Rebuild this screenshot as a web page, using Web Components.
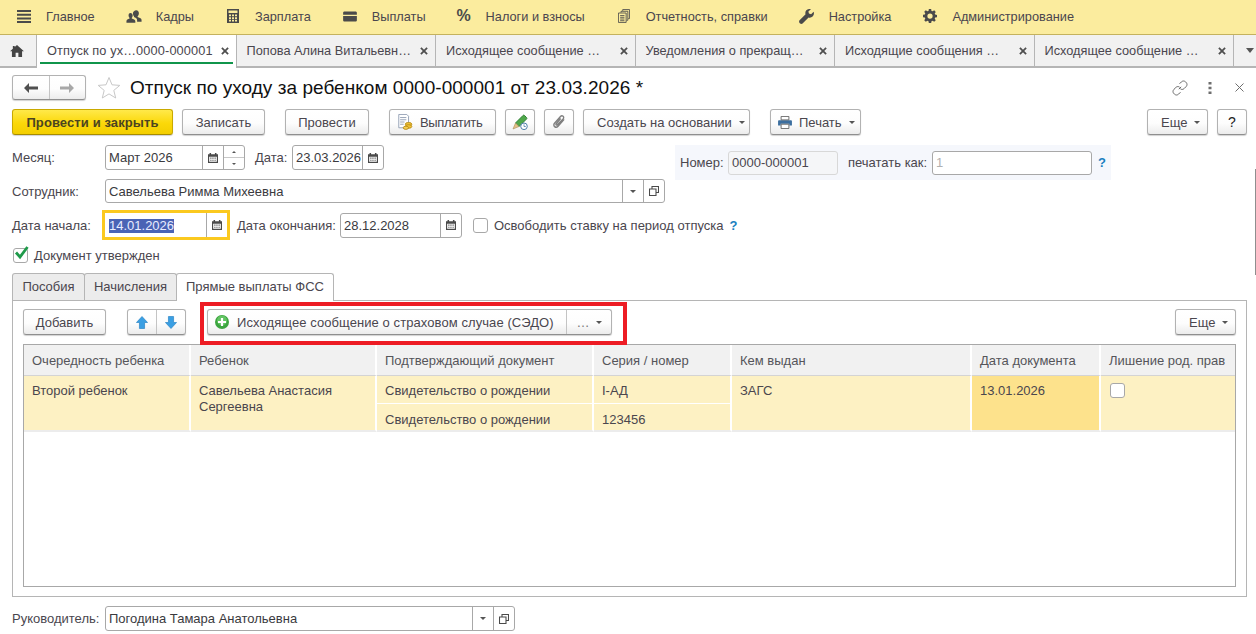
<!DOCTYPE html>
<html lang="ru">
<head>
<meta charset="utf-8">
<title>Отпуск по уходу за ребенком</title>
<style>
  html, body { margin: 0; height: 100%; overflow: hidden; background: #fff; }
  body { position: relative; font: 13px "Liberation Sans", Arial, sans-serif; color: #4b4b4b; }
</style>
</head>
<body>
<app-sections>
  <section-item icon="menu" gap="15" style="margin-left:17px">Главное</section-item>
  <section-item icon="people" gap="14" style="margin-left:31px">Кадры</section-item>
  <section-item icon="calc" gap="16" style="margin-left:33px">Зарплата</section-item>
  <section-item icon="wallet" gap="15" style="margin-left:32px">Выплаты</section-item>
  <section-item icon="percent" gap="15" style="margin-left:31px">Налоги и взносы</section-item>
  <section-item icon="docs" gap="16" style="margin-left:33px">Отчетность, справки</section-item>
  <section-item icon="wrench" gap="15" style="margin-left:31px">Настройка</section-item>
  <section-item icon="gear" gap="15" style="margin-left:32px">Администрирование</section-item>
</app-sections>

<open-tabs>
  <open-tab active style="letter-spacing:.13px">Отпуск по ух…0000-000001</open-tab>
  <open-tab>Попова Алина Витальевн…</open-tab>
  <open-tab>Исходящее сообщение …</open-tab>
  <open-tab>Уведомления о прекращ…</open-tab>
  <open-tab>Исходящие сообщения …</open-tab>
  <open-tab>Исходящее сообщение …</open-tab>
</open-tabs>

<doc-form></doc-form>

<template id="icons">
  <svg data-name="menu" width="14" height="13" viewBox="0 0 14 13"><path fill="#4a4a4a" d="M0 0h14v2H0zM0 3.700h14v2H0zM0 7.400h14v2H0zM0 11h14v2H0z"/></svg>
  <svg data-name="people" width="16" height="15" viewBox="0 0 18 16"><path fill="#4a4a4a" d="M11.500 1c1.900 0 3 1.500 3 3.400 0 1.400-.6 2.600-1.400 3.300v1l3.200 1.400c.8.400 1.200 1 1.200 1.900v2h-5v-1.700c0-1.300-.6-2.200-1.800-2.800l-1.700-.8V7.700c-.8-.7-1.200-2-1.200-3.300C8 2.500 9.600 1 11.500 1zM5 4c1.500 0 2.500 1.200 2.500 2.800 0 1.100-.5 2.100-1 2.700v.8l2.700 1.200c.8.400 1.300 1 1.300 1.800V15H.5v-1.700c0-.8.3-1.400 1-1.800l2.500-1.200v-.8c-.6-.6-1.100-1.600-1.100-2.700C2.900 5.200 3.500 4 5 4z"/></svg>
  <svg data-name="calc" width="12" height="14" viewBox="0 0 12 14"><path fill="#4a4a4a" fill-rule="evenodd" d="M0 0h12v14H0zM1.500 1.500v2.500h9V1.500zM2 5.500v1.700h2V5.500zM5 5.500v1.700h2V5.500zM8 5.500v1.700h2V5.500zM2 8.200v1.700h2V8.200zM5 8.200v1.700h2V8.200zM8 8.200v1.700h2V8.200zM2 10.800v1.700h2v-1.700zM5 10.800v1.700h2v-1.700zM8 10.800v1.700h2v-1.700z"/></svg>
  <svg data-name="wallet" width="14" height="11" viewBox="0 0 15 12"><path fill="#4a4a4a" d="M0 2c0-.8.6-1.500 1.500-1.500h12c.8 0 1.500.7 1.500 1.500v2H0zM0 5.500h15V10c0 .8-.7 1.500-1.500 1.500h-12C.7 11.500 0 10.800 0 10z"/></svg>
  <svg data-name="docs" width="12" height="14" viewBox="0 0 14 16"><path fill="none" stroke="#4a4a4a" d="M.5 4.500h9v11h-9zM2.500 7.500h5M2.500 9.500h5M2.500 11.500h5M2.500 13.500h5M3.500 4V2.500h8V13H10M5.500 2V.5h8V11H12"/></svg>
  <svg data-name="wrench" width="15" height="15" viewBox="0 0 16 16"><path fill="#4a4a4a" d="M15.600 2.900 12.900 5.500l-2.300-.6-.6-2.300L12.700.3C10.900-.4 8.900.1 7.800 1.400 6.700 2.600 6.500 4.300 7 5.700L.6 12.100c-.7.700-.7 1.900 0 2.700l.6.600c.7.700 1.900.7 2.600 0l6.400-6.400c1.400.5 3.100.2 4.300-.9 1.300-1.300 1.800-3.300 1.100-5.200z"/></svg>
  <svg data-name="gear" width="14" height="14" viewBox="0 0 16 16"><path fill="#4a4a4a" fill-rule="evenodd" d="M6.700 0h2.600l.4 2.200 1.300.5L12.800 1.500l1.800 1.800-1.200 1.800.5 1.300 2.100.4v2.600l-2.100.4-.5 1.300 1.200 1.800-1.800 1.800-1.800-1.200-1.300.5-.4 2.200H6.700l-.4-2.200-1.300-.5-1.800 1.200-1.800-1.800 1.200-1.800-.5-1.300L0 9.300V6.700l2.100-.4.5-1.300-1.200-1.800 1.800-1.800L5 2.700l1.300-.5zM8 5a3 3 0 1 0 0 6 3 3 0 0 0 0-6z"/></svg>
  <svg data-name="home" width="14" height="12" viewBox="0 0 15 13"><path fill="#444" d="M7.500 0 15 6.700h-2V13H9V8.500H6V13H2V6.700H0L3 4V1h2v1.300z"/></svg>
  <svg data-name="close" width="8" height="8" viewBox="0 0 9 9"><path stroke="#4f4f4f" stroke-width="2" d="M1 1l7 7M8 1 1 8"/></svg>
  <svg data-name="back" width="14" height="10" viewBox="0 0 14 10"><path fill="#4f4f4f" d="M5 0v3.500h9v3H5V10L0 5z"/></svg>
  <svg data-name="forward" width="14" height="10" viewBox="0 0 14 10"><path fill="#a8a8a8" d="M9 0v3.500H0v3h9V10l5-5z"/></svg>
  <svg data-name="star" width="24" height="23" viewBox="0 0 24 23"><path fill="#fff" stroke="#c8c8c8" d="M12 1.500l3 7.300 7.800.6-6 5 1.900 7.600L12 17.900 5.300 22l1.900-7.600-6-5 7.800-.6z"/></svg>
  <svg data-name="link" width="16" height="16" viewBox="0 0 16 16"><path fill="none" stroke="#6a6a6a" d="M6.800 9.200 9.200 6.800M7.500 3.800l1.900-1.900c1.200-1.200 3-1.200 4.200 0l.5.500c1.200 1.200 1.200 3 0 4.200l-1.900 1.900c-1.200 1.200-2.800 1.200-3.800.3M8.500 12.200l-1.900 1.900c-1.200 1.200-3 1.200-4.200 0l-.5-.5c-1.200-1.200-1.200-3 0-4.200l1.900-1.900c1.200-1.200 2.800-1.200 3.800-.3"/></svg>
  <svg data-name="dots" width="4" height="12" viewBox="0 0 4 12"><path fill="#6e6e6e" d="M.5 0h3v2.500h-3zM.5 4.700h3v2.500h-3zM.5 9.400h3v2.500h-3z"/></svg>
  <svg data-name="thin-close" width="9" height="9" viewBox="0 0 9 9"><path stroke="#6e6e6e" d="M.5.500l8 8M8.500.500l-8 8"/></svg>
  <svg data-name="pay" width="16" height="16" viewBox="0 0 17 18"><path fill="#fff" stroke="#8d9bb0" d="M1.500.5h9l2 2v13h-11z"/><path stroke="#8d9bb0" d="M3 4h7M3 6.500h7M3 9h5M3 11.500h4"/><ellipse cx="12.500" cy="11.500" rx="3.700" ry="2" fill="#f1c232" stroke="#b78b18"/><ellipse cx="12.500" cy="14" rx="3.700" ry="2" fill="#f1c232" stroke="#b78b18"/><ellipse cx="9.500" cy="15.500" rx="3" ry="1.800" fill="#f5cf52" stroke="#b78b18"/></svg>
  <svg data-name="pencil" width="16" height="16" viewBox="0 0 16 16"><path fill="#4fa84a" stroke="#2d7f33" d="M3.500 9 11 1.500c.5-.5 1-.5 1.500 0l2 2c.5.500.5 1 0 1.500L7 12.500z"/><path fill="#e3c187" stroke="#a98b58" stroke-width=".6" d="M3.500 9 7 12.500 1 15z"/><circle cx="12" cy="12.300" r="3.300" fill="#fff" stroke="#4d7fa8"/><path fill="none" stroke="#4d7fa8" stroke-width=".8" d="M12 10.300v2.200h1.800"/></svg>
  <svg data-name="clip" width="14" height="16" viewBox="0 0 15 17"><path fill="none" stroke="#808080" stroke-width="1.500" d="M13 5.500 6.500 13c-1 1.200-2.600 1.400-3.700.5-1.100-.9-1.100-2.500-.1-3.700l6.400-7.200c.8-.9 2-.9 2.800-.2.800.7.800 1.900 0 2.800L5.800 11.400c-.4.500-1 .5-1.300.2-.4-.3-.3-.9 0-1.300l4.800-5.500"/></svg>
  <svg data-name="print" width="14" height="13" viewBox="0 0 16 15"><path fill="#3d6f9f" d="M1 5h14c.6 0 1 .4 1 1v5h-3V9H3v2H0V6c0-.6.400-1 1-1z"/><path fill="#fff" stroke="#5a5a5a" d="M3.500.5h9v4h-9zM3.500 9.500h9v5h-9z"/></svg>
  <svg data-name="calendar" width="10" height="10" viewBox="0 0 13 13"><path fill="#4a4a4a" fill-rule="evenodd" d="M2 0h2v1.500h5V0h2v1.500h2V13H0V1.500h2zM1.500 5v6.500h10V5zM3 6h1.500v1.500H3zM5.700 6h1.500v1.500H5.700zM8.500 6H10v1.500H8.500zM3 8.700h1.500v1.500H3zM5.700 8.700h1.500v1.500H5.700zM8.500 8.700H10v1.500H8.500z"/></svg>
  <svg data-name="open" width="10" height="10" viewBox="0 0 12 12"><path fill="none" stroke="#4a4a4a" stroke-width="1.300" d="M3.600 3.600V.6h7.800v7.200H8.400M.6 3.600h7.800v7.800H.6z"/></svg>
  <svg data-name="up" width="12" height="13" viewBox="0 0 14 15"><path fill="#3a9fe3" stroke="#2a84c4" stroke-width=".8" d="M7 .5l6.500 7H10V14.500H4V7.500H.5z"/></svg>
  <svg data-name="down" width="12" height="13" viewBox="0 0 14 15"><path fill="#3a9fe3" stroke="#2a84c4" stroke-width=".8" d="M4 .5h6v7h3.500L7 14.500.5 7.500H4z"/></svg>
  <svg data-name="add" width="14" height="14" viewBox="0 0 14 14"><circle cx="7" cy="7" r="7" fill="#3ca53f"/><circle cx="7" cy="5.500" r="5" fill="#63c463"/><path stroke="#fff" stroke-width="2.200" d="M7 3v8M3 7h8"/></svg>
  <svg data-name="check" width="15" height="14" viewBox="0 0 15 14"><path fill="none" stroke="#1f9a4a" stroke-width="2.800" d="M2 6.500l4 4.500L13.500 1"/></svg>
</template>

<script>
  // общий набор иконок лежит в одном template, чтобы не дублировать разметку в shadow root
  function icon(name) {
    const src = document.getElementById('icons').content.querySelector(`[data-name="${name}"]`);
    return src ? src.outerHTML : '';
  }

  function glyphPercent() {
    return '<span style="font:bold 16px \'Liberation Sans\',sans-serif;color:#4a4a4a;width:14px;display:block;line-height:16px">%</span>';
  }

  class AppSections extends HTMLElement {
    constructor() {
      super();
      this.attachShadow({ mode: 'open' });
      this.shadowRoot.innerHTML = `
        <style>
          :host { display: flex; align-items: center; height: 32px; padding-bottom: 2px; background: #fbec9e; border-bottom: 1px solid #c4b25e; }
        </style>
        <slot></slot>`;
    }
  }

  class SectionItem extends HTMLElement {
    constructor() {
      super();
      this.attachShadow({ mode: 'open' });
    }
    connectedCallback() {
      const name = this.getAttribute('icon');
      const gap = this.getAttribute('gap') || 15;
      this.shadowRoot.innerHTML = `
        <style>
          :host { display: inline-flex; align-items: center; color: #4a464e; font-size: 12.750px; }
          i { display: flex; align-items: center; margin-right: ${gap}px; }
        </style>
        <i>${name == 'percent' ? glyphPercent() : icon(name)}</i><slot></slot>`;
    }
  }

  class OpenTabs extends HTMLElement {
    constructor() {
      super();
      this.attachShadow({ mode: 'open' });
      this.shadowRoot.innerHTML = `
        <style>
          :host { display: flex; height: 31px; background: #f1f1f1; border-bottom: 2px solid #b5b5b5; }
          .home { width: 37px; flex: none; display: flex; align-items: center; justify-content: center; border-right: 1px solid #b5b5b5; padding-right: 2px; box-sizing: border-box; }
          .more { flex: 1; display: flex; align-items: center; justify-content: flex-end; padding-right: 2px; }
          .more b { border: 4px solid transparent; border-top: 5px solid #555; border-bottom: 0; }
        </style>
        <div class="home">${icon('home')}</div>
        <slot></slot>
        <div class="more"><b></b></div>`;
    }
  }

  class OpenTab extends HTMLElement {
    constructor() {
      super();
      this.attachShadow({ mode: 'open' });
      this.shadowRoot.innerHTML = `
        <style>
          :host { position: relative; display: flex; flex: none; align-items: center; justify-content: space-between; box-sizing: border-box; width: 199.500px; padding: 0 7px 0 10px; height: 31px; border-right: 1px solid #b5b5b5; font-size: 12.750px; color: #4a464e; white-space: nowrap; }
          :host([active]) { background: #fff; height: 33px; margin-bottom: -2px; padding-bottom: 2px; }
          :host([active])::after { content: ""; position: absolute; left: 3px; right: 3px; bottom: 4px; height: 2px; background: #10954b; }
          i { display: flex; }
        </style>
        <span><slot></slot></span><i>${icon('close')}</i>`;
    }
  }

  class ToolBtn extends HTMLElement {
    constructor() {
      super();
      this.attachShadow({ mode: 'open' });
    }
    connectedCallback() {
      const menu = this.hasAttribute('menu') ? '<b class="arrow"></b>' : '';
      const name = this.getAttribute('icon');
      this.shadowRoot.innerHTML = `
        <style>
          :host { display: inline-flex; align-items: center; justify-content: center; box-sizing: border-box; height: 26px; padding: 0 10px; flex: none; white-space: nowrap; color: #4a464e; border: 1px solid #b2b2b2; border-bottom-color: #8f8f8f; border-radius: 3px; background: linear-gradient(#fff, #fdfdfd 55%, #ececec); box-shadow: 0 1px 1px rgba(0,0,0,.18); }
          :host([menu]), :host([icon]) { justify-content: flex-start; }
          :host([primary]) { background: linear-gradient(#ffe94a, #fbd809 55%, #f3ce00); border-color: #c9a900; border-bottom-color: #a78c00; font-weight: bold; color: #4b4420; letter-spacing: .1px; }
          i { display: flex; }
          i.text { margin-right: 7px; }
          .arrow { border: 3px solid transparent; border-top: 3px solid #555; border-bottom: 0; margin-left: 7px; }
        </style>
        ${name ? `<i class="${this.textContent.trim() ? 'text' : ''}">${icon(name)}</i>` : ''}<slot></slot>${menu}`;
    }
  }

  class SplitNav extends HTMLElement {
    constructor() {
      super();
      this.attachShadow({ mode: 'open' });
    }
    connectedCallback() {
      const items = this.getAttribute('icons').split(' ');
      const w = this.getAttribute('item-width') || 37;
      this.shadowRoot.innerHTML = `
        <style>
          :host { display: inline-flex; box-sizing: border-box; height: ${this.getAttribute('h') || 26}px; flex: none; border: 1px solid #b2b2b2; border-bottom-color: #8f8f8f; border-radius: 3px; background: linear-gradient(#fff, #fdfdfd 55%, #ececec); box-shadow: 0 1px 1px rgba(0,0,0,.18); }
          span { display: flex; align-items: center; justify-content: center; width: ${w}px; }
          span + span { border-left: 1px solid #c4c4c4; }
        </style>
        ${items.map(n => `<span>${icon(n)}</span>`).join('')}`;
    }
  }

  class InputField extends HTMLElement {
    constructor() {
      super();
      this.attachShadow({ mode: 'open' });
    }
    connectedCallback() {
      const buttons = (this.getAttribute('buttons') || '').split(' ').filter(Boolean);
      const parts = buttons.map(b => {
        if (b == 'drop') return '<span class="btn"><b class="arrow"></b></span>';
        if (b == 'spin') return '<span class="btn spin"><em><b class="up"></b></em><em><b class="arrow"></b></em></span>';
        return `<span class="btn">${icon(b)}</span>`;
      }).join('');
      this.shadowRoot.innerHTML = `
        <style>
          :host { display: inline-flex; box-sizing: border-box; height: 25px; flex: none; border: 1px solid #a8a8a8; border-radius: 3px; background: #fff; color: #3a3a3e; }
          :host([focused]) { border: 3px solid #fbc91f; border-radius: 0; height: 30px; }
          :host([focused]) .val { padding-left: 4px; }
          :host([readonly]) { background: #f5f6f8; border-color: #d8d8d8; color: #4a464e; }
          :host([dim]) { color: #b0b0b0; }
          .val { flex: 1; min-width: 0; display: flex; align-items: center; padding-left: 3px; white-space: nowrap; overflow: hidden; }
          .btn { flex: none; width: 20px; display: flex; align-items: center; justify-content: center; border-left: 1px solid #a8a8a8; }
          .spin { flex-direction: column; }
          .spin em { flex: 1; display: flex; align-items: center; justify-content: center; width: 100%; }
          .spin em + em { border-top: 1px solid #c8c8c8; }
          .arrow { border: 3px solid transparent; border-top: 3px solid #555; border-bottom: 0; }
          .up { border: 2px solid transparent; border-bottom: 2px solid #555; border-top: 0; }
          .spin .arrow { border-width: 2px; border-bottom: 0; border-top-color: #555; }
        </style>
        <div class="val"><slot></slot></div>${parts}`;
    }
  }

  class CheckBox extends HTMLElement {
    constructor() {
      super();
      this.attachShadow({ mode: 'open' });
      this.shadowRoot.innerHTML = `
        <style>
          :host { display: inline-flex; align-items: center; flex: none; color: #4a464e; }
          .box { position: relative; box-sizing: border-box; width: 15px; height: 15px; border: 1px solid #a8a8a8; border-radius: 3px; background: #fff; }
          :host([has-text]) .box { margin-right: 6px; }
          .box svg { position: absolute; left: 0; top: -3px; display: none; }
          :host([checked]) .box svg { display: block; }
        </style>
        <span class="box">${icon('check')}</span><slot></slot>`;
    }
  }

  class FormTabs extends HTMLElement {
    constructor() {
      super();
      this.attachShadow({ mode: 'open' });
      this.shadowRoot.innerHTML = `
        <style>
          :host { display: block; }
          .tabs { display: flex; height: 27px; }
          .tabs span { box-sizing: border-box; display: flex; align-items: center; justify-content: center; height: 27px; padding-bottom: 2px; background: #ececec; border: 1px solid #b5b5b5; border-bottom: 0; border-radius: 3px 3px 0 0; color: #4a464e; }
          .tabs span.on { background: #fff; height: 28px; padding-bottom: 3px; position: relative; z-index: 1; }
          .panel { box-sizing: border-box; height: 297px; border: 1px solid #b5b5b5; padding: 8px 10px 10px; }
        </style>
        <div class="tabs">
          <span style="width:73px">Пособия</span>
          <span style="width:93px;margin-left:-1px">Начисления</span>
          <span class="on" style="width:158px;margin-left:-1px">Прямые выплаты ФСС</span>
        </div>
        <div class="panel"><slot></slot></div>`;
    }
  }

  class RedFrame extends HTMLElement {
    constructor() {
      super();
      this.attachShadow({ mode: 'open' });
      this.shadowRoot.innerHTML = `
        <style>
          :host { position: relative; display: inline-flex; flex: none; }
          .frame { position: absolute; left: -7px; top: -7px; right: -15px; bottom: -10px; border: 4px solid #ed1c24; pointer-events: none; z-index: 2; }
        </style>
        <slot></slot><div class="frame"></div>`;
    }
  }

  class SplitButton extends HTMLElement {
    constructor() {
      super();
      this.attachShadow({ mode: 'open' });
      this.shadowRoot.innerHTML = `
        <style>
          :host { display: inline-flex; box-sizing: border-box; height: 26px; width: 405px; border: 1px solid #b2b2b2; border-bottom-color: #8f8f8f; border-radius: 3px; background: linear-gradient(#fff, #fdfdfd 55%, #ececec); box-shadow: 0 1px 1px rgba(0,0,0,.18); color: #4a464e; letter-spacing: .08px; }
          .main { flex: 1; display: flex; align-items: center; padding-left: 7px; }
          .main svg { margin-right: 8px; }
          .more { flex: none; width: 44px; display: flex; align-items: center; justify-content: center; border-left: 1px solid #c4c4c4; color: #777; }
          .more b { border: 3px solid transparent; border-top: 3px solid #555; border-bottom: 0; margin-left: 6px; }
        </style>
        <div class="main">${icon('add')}<slot></slot></div>
        <div class="more">…<b></b></div>`;
    }
  }

  class ChildTable extends HTMLElement {
    constructor() {
      super();
      this.attachShadow({ mode: 'open' });
      this.shadowRoot.innerHTML = `
        <style>
          :host { display: block; box-sizing: border-box; height: 243px; border: 1px solid #a8a8a8; color: #4a464e; }
          .grid { display: grid; grid-template-columns: 167px 186px 217px 138px 240px 129px 1fr; grid-template-rows: 31px 28px 28px; background: #fff; }
          .grid > div { box-sizing: border-box; padding: 0 8px; border-right: 2px solid #fff; white-space: nowrap; }
          .h { background: #f1f1f1; display: flex; align-items: center; border-bottom: 1px solid #d4d4d4; color: #55555a; }
          .c { background: #fdf1c3; padding-top: 7px !important; line-height: 16px; }
          .c.tall { grid-row: span 2; border-bottom: 2px solid #ececec; }
          .c.low { border-bottom: 2px solid #ececec; padding-top: 8px !important; }
          .c.top { border-bottom: 1px solid #fff; }
          .c.date { background: #fde28c; }
          .c.chk { padding-left: 9px !important; padding-top: 7px !important; border-right: 0; }
          .grid > div:nth-child(7) { border-right: 0; }
        </style>
        <div class="grid">
          <div class="h">Очередность ребенка</div>
          <div class="h">Ребенок</div>
          <div class="h">Подтверждающий документ</div>
          <div class="h">Серия / номер</div>
          <div class="h">Кем выдан</div>
          <div class="h">Дата документа</div>
          <div class="h">Лишение род. прав</div>
          <div class="c tall">Второй ребенок</div>
          <div class="c tall">Савельева Анастасия<br>Сергеевна</div>
          <div class="c top">Свидетельство о рождении</div>
          <div class="c top">I-АД</div>
          <div class="c tall">ЗАГС</div>
          <div class="c tall date">13.01.2026</div>
          <div class="c tall chk"><check-box></check-box></div>
          <div class="c low">Свидетельство о рождении</div>
          <div class="c low">123456</div>
        </div>`;
    }
  }

  class DocForm extends HTMLElement {
    constructor() {
      super();
      this.attachShadow({ mode: 'open' });
      this.shadowRoot.innerHTML = `
        <style>
          :host { display: block; padding: 7px 9px 0 12px; color: #4a464e; }
          .title { display: flex; align-items: center; height: 25px; }
          h1 { margin: 0 0 0 9px; font: 19px "Liberation Sans", sans-serif; letter-spacing: .04px; color: #111; flex: 1; white-space: nowrap; }
          .title i { display: flex; margin-left: 11px; }
          .win { display: flex; align-items: center; }
          .cmd { display: flex; margin-top: 9px; }
          .sp { flex: 1; }
          .top { display: flex; margin-top: 10px; }
          .left { width: 653px; }
          .row { display: flex; align-items: center; }
          .lbl { width: 93px; flex: none; }
          .number { display: flex; align-items: center; box-sizing: border-box; width: 436px; height: 35px; margin-left: 10px; background: #f5f7fc; padding: 0 0 0 5px; }
          .q { color: #1a7fc0; font-weight: bold; font-size: 13px; }
          .thumb { position: absolute; right: 0; top: 169px; width: 1px; height: 106px; background: #8f8f8f; }
        </style>
        <div class="title">
          <split-nav icons="back forward" item-width="35.500" h="25"></split-nav>
          <i>${icon('star')}</i>
          <h1>Отпуск по уходу за ребенком 0000-000001 от 23.03.2026 *</h1>
          <span class="win">
            ${icon('link')}
            <span style="width:20px"></span>${icon('dots')}
            <span style="width:23px"></span>${icon('thin-close')}
            <span style="width:3px"></span>
          </span>
        </div>
        <div class="cmd">
          <tool-btn primary style="width:161px">Провести и закрыть</tool-btn>
          <tool-btn style="width:83px;margin-left:9px">Записать</tool-btn>
          <tool-btn style="width:84px;margin-left:20px">Провести</tool-btn>
          <tool-btn icon="pay" style="width:107px;margin-left:20px;padding-left:7px;letter-spacing:-.35px">Выплатить</tool-btn>
          <tool-btn icon="pencil" style="width:30px;margin-left:9px;padding:0;justify-content:center"></tool-btn>
          <tool-btn icon="clip" style="width:30px;margin-left:9px;padding:0;justify-content:center"></tool-btn>
          <tool-btn menu style="width:167px;margin-left:9px;padding-left:13px">Создать на основании</tool-btn>
          <tool-btn icon="print" menu style="width:91px;margin-left:20px;padding-left:7px">Печать</tool-btn>
          <span class="sp"></span>
          <tool-btn menu style="width:61px;padding-left:13px">Еще</tool-btn>
          <tool-btn style="width:30px;margin-left:9px;color:#222;font-size:14px">?</tool-btn>
        </div>
        <div class="top">
          <div class="left">
            <div class="row">
              <span class="lbl">Месяц:</span>
              <input-field buttons="calendar spin" style="width:140px">Март 2026</input-field>
              <span style="margin-left:10px;width:37px">Дата:</span>
              <input-field buttons="calendar" style="width:92px">23.03.2026</input-field>
            </div>
            <div class="row" style="margin-top:9px">
              <span class="lbl">Сотрудник:</span>
              <input-field buttons="drop open" style="width:560px;height:24px">Савельева Римма Михеевна</input-field>
            </div>
          </div>
          <div class="number">
            <span style="width:48px">Номер:</span>
            <input-field readonly style="width:110px;height:24px">0000-000001</input-field>
            <span style="margin-left:10px;width:84px">печатать как:</span>
            <input-field dim style="width:160px;height:24px">1</input-field>
            <span class="q" style="margin-left:6px">?</span>
          </div>
        </div>
        <div class="row" style="margin-top:7px;height:30px">
          <span class="lbl">Дата начала:</span>
          <input-field focused buttons="calendar" style="width:128px;margin-left:-3px"><span style="background:#4a63b5;color:#e8ecff;line-height:14px;display:block;margin-top:1px">14.01.2026</span></input-field>
          <span style="margin-left:7px;width:103px">Дата окончания:</span>
          <input-field buttons="calendar" style="width:122px">28.12.2028</input-field>
          <check-box has-text style="margin-left:11px">Освободить ставку на период отпуска</check-box>
          <span class="q" style="margin-left:6px">?</span>
        </div>
        <div class="row" style="margin-top:5px;height:20px">
          <check-box has-text checked style="margin-left:1px">Документ утвержден</check-box>
        </div>
        <form-tabs style="margin-top:8px">
          <div style="display:flex">
            <tool-btn style="width:83px">Добавить</tool-btn>
            <split-nav icons="up down" item-width="28" style="margin-left:21px"></split-nav>
            <red-frame style="margin-left:21px"><split-button>Исходящее сообщение о страховом случае (СЭДО)</split-button></red-frame>
            <span style="flex:1"></span>
            <tool-btn menu style="width:61px;padding-left:13px">Еще</tool-btn>
          </div>
          <child-table style="margin-top:9px"></child-table>
        </form-tabs>
        <div class="row" style="margin-top:9px">
          <span style="width:93px;flex:none">Руководитель:</span>
          <input-field buttons="drop open" style="width:410px">Погодина Тамара Анатольевна</input-field>
        </div>
        <div class="thumb"></div>`;
    }
  }

  customElements.define('app-sections', AppSections);
  customElements.define('section-item', SectionItem);
  customElements.define('open-tabs', OpenTabs);
  customElements.define('open-tab', OpenTab);
  customElements.define('tool-btn', ToolBtn);
  customElements.define('split-nav', SplitNav);
  customElements.define('input-field', InputField);
  customElements.define('check-box', CheckBox);
  customElements.define('form-tabs', FormTabs);
  customElements.define('red-frame', RedFrame);
  customElements.define('split-button', SplitButton);
  customElements.define('child-table', ChildTable);
  customElements.define('doc-form', DocForm);
</script>
</body>
</html>
